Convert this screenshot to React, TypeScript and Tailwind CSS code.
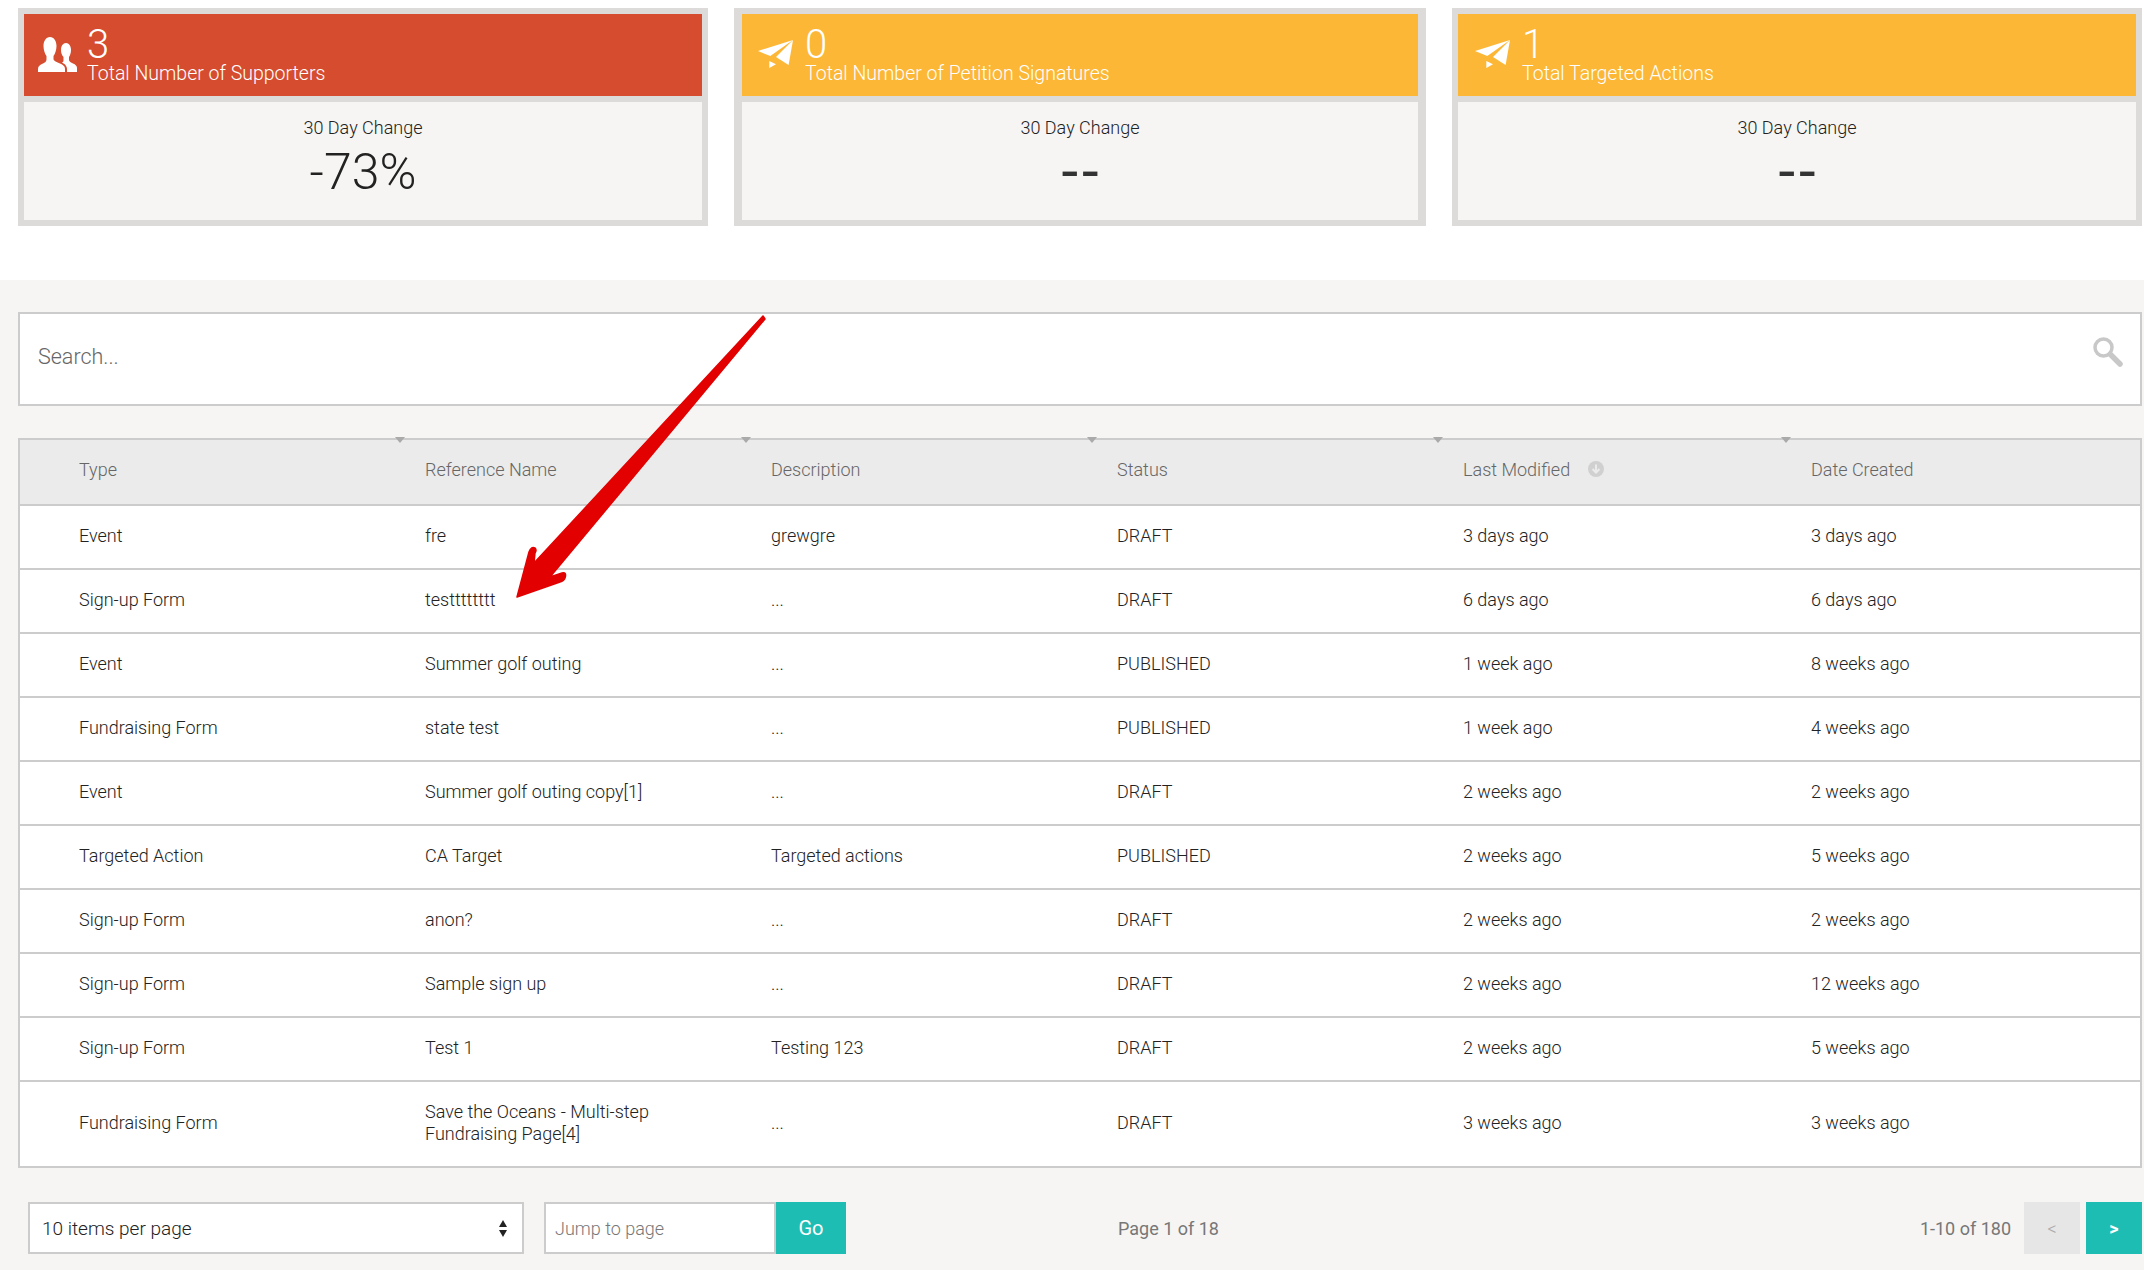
const rows = [
  ["Event", "fre", "grewgre", "DRAFT", "3 days ago", "3 days ago"],
  ["Sign-up Form", "testttttttt", "...", "DRAFT", "6 days ago", "6 days ago"],
  ["Event", "Summer golf outing", "...", "PUBLISHED", "1 week ago", "8 weeks ago"],
  ["Fundraising Form", "state test", "...", "PUBLISHED", "1 week ago", "4 weeks ago"],
  ["Event", "Summer golf outing copy[1]", "...", "DRAFT", "2 weeks ago", "2 weeks ago"],
  ["Targeted Action", "CA Target", "Targeted actions", "PUBLISHED", "2 weeks ago", "5 weeks ago"],
  ["Sign-up Form", "anon?", "...", "DRAFT", "2 weeks ago", "2 weeks ago"],
  ["Sign-up Form", "Sample sign up", "...", "DRAFT", "2 weeks ago", "12 weeks ago"],
  ["Sign-up Form", "Test 1", "Testing 123", "DRAFT", "2 weeks ago", "5 weeks ago"],
  ["Fundraising Form", "Save the Oceans - Multi-step Fundraising Page[4]", "...", "DRAFT", "3 weeks ago", "3 weeks ago"],
];

const columns = ["Type", "Reference Name", "Description", "Status", "Last Modified", "Date Created"];

function PeopleIcon() {
  return (
    <svg viewBox="0 0 39 35" className="w-[39px] h-[35px] mb-[13px] mr-[10px] fill-white shrink-0">
      <path d="M12 0C16 0 18.500 4 18.500 9C18.500 13 17 17 15.500 19V22C15.500 24 19 25 22 26.500C25 28 27 29 27 32V35H0V32C0 29 2 28 5 26.500C8 25 8.500 24 8.500 22V19C7 17 5.500 13 5.500 9C5.500 4 8 0 12 0Z" />
      <path d="M28 6C31 6 33 9 33 13C33 16 32 18.500 31 20V23C31 24.500 33 25.500 35 26.500C37.500 27.500 39 29 39 31V35H29V32C29 28.500 26 26.500 24 25.500C25.500 25 25.500 24 25.500 23V20C24 18.500 23 16 23 13C23 9 25 6 28 6Z" />
    </svg>
  );
}

function PlaneIcon() {
  return (
    <svg viewBox="0 0 35 28" className="w-[35px] h-[28px] mb-[17px] mr-[12px] fill-white shrink-0">
      <path d="M35 0 0 11l12.300 5z" />
      <path d="M35 0 18 17l12.600 8z" />
      <path d="M11.300 21v7l6.700-3.700z" />
    </svg>
  );
}

function StatCard({ value, label, change, color, pad, side, icon }: { value: string; label: string; change: string; color: string; pad: string; side: string; icon: React.ReactNode }) {
  return (
    <div className={`h-[218px] border-y-[6px] ${side} border-[#dcdbd9] bg-[#f6f5f3] flex flex-col`}>
      <div className={`h-[88px] shrink-0 border-b-[6px] border-[#dcdbd9] ${color} ${pad} flex items-end pb-[11px] text-white`}>
        {icon}
        <div className="flex flex-col">
          <span className="text-[40px] leading-[36px] font-light">{value}</span>
          <span className="text-[19.500px] leading-[22px] font-light">{label}</span>
        </div>
      </div>
      <div className="flex flex-col items-center pt-[14px]">
        <span className="text-[18px] leading-[24px] font-light text-[#222]">30 Day Change</span>
        {change === "--" ? (
          <span className="mt-[4px] pl-[4px] text-[60px] leading-[56px] font-normal tracking-[4px] text-[#333]">{change}</span>
        ) : (
          <span className="mt-[4px] text-[50px] leading-[56px] font-light text-[#222]">{change}</span>
        )}
      </div>
    </div>
  );
}

export default function App() {
  return (
    <div className="relative w-[2144px] h-[1270px] overflow-hidden bg-white font-['Roboto',sans-serif]">
      {/* Stat cards */}
      <div className="h-[280px] pt-[8px] pl-[18px] pr-[2px] grid grid-cols-[690px_692px_690px] gap-[26px] items-start">
        <StatCard value="3" label="Total Number of Supporters" change="-73%" color="bg-[#d54c2f]" pad="pl-[14px]" side="border-x-[6px]" icon={<PeopleIcon />} />
        <StatCard value="0" label="Total Number of Petition Signatures" change="--" color="bg-[#fcb736]" pad="pl-[16px]" side="border-x-[8px]" icon={<PlaneIcon />} />
        <StatCard value="1" label="Total Targeted Actions" change="--" color="bg-[#fcb736]" pad="pl-[17px]" side="border-x-[6px]" icon={<PlaneIcon />} />
      </div>

      <div className="h-[990px] bg-[#f6f5f3] pt-[32px] pl-[18px] pr-[2px]">
        {/* Search */}
        <div className="h-[94px] border-2 border-[#ccc] bg-white flex items-center justify-between pl-[18px] pr-[17px]">
          <span className="text-[21.500px] font-light text-[#666] pb-[4px]">Search...</span>
          <svg viewBox="0 0 30 30" className="w-[30px] h-[30px] -translate-y-[7px] fill-none stroke-[#c8c8c8]">
            <circle cx="10.500" cy="10.500" r="8.500" strokeWidth="3.500" />
            <path d="M17.500 17.500 27 27" strokeWidth="5.500" strokeLinecap="round" />
          </svg>
        </div>

        {/* Table */}
        <div className="mt-[32px] border-2 border-[#ccc] bg-white">
          <div className="h-[66px] bg-[#ebebeb] border-b-2 border-[#ccc] grid grid-cols-[405px_346px_346px_346px_348px_1fr] items-center text-[18px] font-light text-[#666]">
            {columns.map((col, i) => (
              <div key={col} className={`relative h-full flex items-center gap-[18px] pb-[5px] ${i === 0 ? "pl-[59px]" : ""}`}>
                {col}
                {col === "Last Modified" && (
                  <svg viewBox="0 0 16 16" className="w-[16px] h-[16px] -translate-y-[1px]">
                    <circle cx="8" cy="8" r="8" fill="#d0d0d0" />
                    <path d="M8 3.500v8M4.500 8 8 11.500 11.500 8" stroke="#ebebeb" strokeWidth="2" fill="none" />
                  </svg>
                )}
                {i > 0 && <span className="absolute left-[-30px] top-[-3px] w-0 h-0 border-x-[5px] border-x-transparent border-t-[6px] border-t-[#aaa]" />}
              </div>
            ))}
          </div>
          {rows.map((row, r) => (
            <div
              key={r}
              className={`grid grid-cols-[405px_346px_346px_346px_348px_1fr] items-center text-[18px] leading-[22px] font-light text-[#222] ${r === rows.length - 1 ? "h-[84px] pb-[3px]" : "h-[64px] pb-[2px] border-b-2 border-[#ccc]"}`}
            >
              {row.map((cell, i) => (
                <div key={i} className={i === 0 ? "pl-[59px]" : "pr-[60px]"}>
                  {cell}
                </div>
              ))}
            </div>
          ))}
        </div>

        {/* Footer */}
        <div className="mt-[34px] h-[52px] flex items-center text-[18px] font-light">
          <div className="ml-[10px] w-[496px] h-[52px] border-2 border-[#ccc] bg-white flex items-center justify-between pl-[12px] pr-[15px] text-[19px] text-[#222]">
            <span className="pt-[2px]">10 items per page</span>
            <span className="flex flex-col gap-[3px]">
              <span className="w-0 h-0 border-x-[4.500px] border-x-transparent border-b-[7px] border-b-[#222]" />
              <span className="w-0 h-0 border-x-[4.500px] border-x-transparent border-t-[7px] border-t-[#222]" />
            </span>
          </div>
          <div className="ml-[20px] w-[232px] h-[52px] border-2 border-[#ccc] bg-white flex items-center pl-[9px] text-[#777]">Jump to page</div>
          <div className="w-[70px] h-[52px] bg-[#1ebdb4] text-white text-[20px] font-normal flex items-center justify-center">Go</div>
          <span className="ml-[272px] font-normal text-[#777]">Page 1 of 18</span>
          <span className="ml-auto mr-[13px] font-normal text-[#777]">1-10 of 180</span>
          <div className="w-[56px] h-[52px] bg-[#e6e6e6] text-[#aaa] flex items-center justify-center">&lt;</div>
          <div className="ml-[6px] w-[56px] h-[52px] bg-[#1ebdb4] text-white font-bold flex items-center justify-center">&gt;</div>
        </div>
      </div>

      {/* Annotation arrow drawn over the page */}
      <svg viewBox="0 0 2144 1270" className="absolute inset-0 w-[2144px] h-[1270px] pointer-events-none">
        <defs>
          <linearGradient id="arrowFill" x1="0" y1="0" x2="1" y2="1">
            <stop offset="0" stopColor="#e80000" />
            <stop offset="1" stopColor="#dd0000" />
          </linearGradient>
        </defs>
        <path
          d="M763 316 L765 319 L550 577 L562 573 Q567 572 565 578 Q564 581 560 582 L517 597 L529 552 Q531 546 535 548 Q537 550 535 553 L534 563 Z"
          fill="url(#arrowFill)"
          stroke="#e20000"
          strokeWidth="1.500"
          strokeLinejoin="round"
        />
      </svg>
    </div>
  );
}
